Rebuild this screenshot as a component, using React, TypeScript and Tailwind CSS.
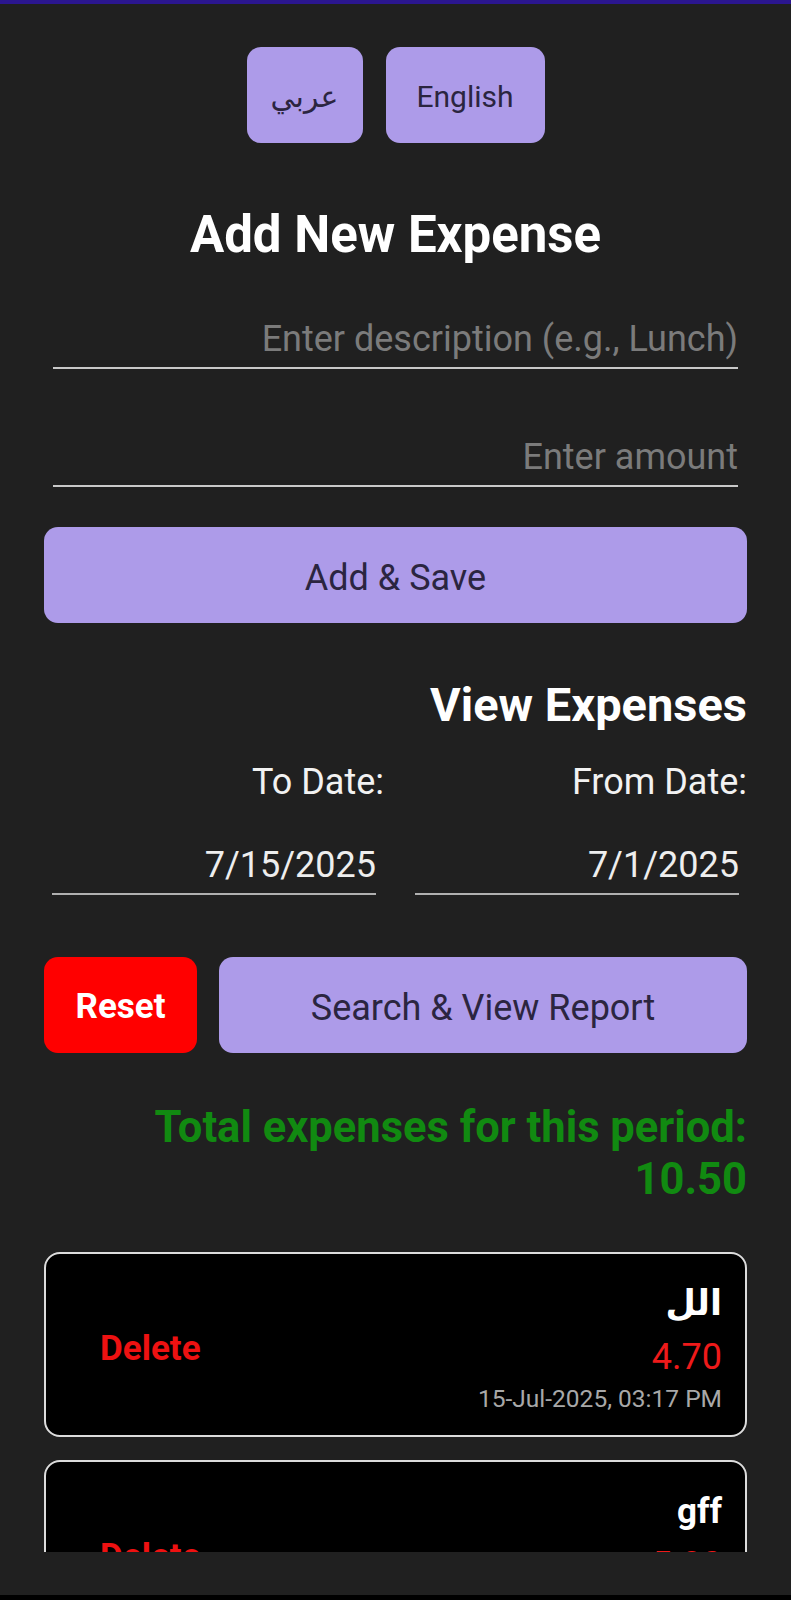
import React from "react";

const expenses = [
  { id: 1, title: "الل", amount: "4.70", date: "15-Jul-2025, 03:17 PM" },
  { id: 2, title: "gff", amount: "5.80", date: "15-Jul-2025, 03:12 PM" },
];

function UnderlineInput({ placeholder, value }: { placeholder?: string; value?: string }) {
  return (
    <div className="mx-[9px] border-b-2 border-[#c8c8c8] pb-[7px]">
      <input
        className="w-full h-[41px] bg-transparent text-right text-[36px] leading-[41px] text-[#eeeeee] placeholder:text-[#7b7b7b] outline-none"
        placeholder={placeholder}
        defaultValue={value}
      />
    </div>
  );
}

export default function App() {
  return (
    <div className="w-[791px] h-[1600px] bg-[#202020] flex flex-col font-[Roboto,'DejaVu_Sans',sans-serif]">
      <div className="h-[4px] bg-[#2b168f] shrink-0" />

      <div className="h-[1548px] overflow-hidden px-[44px] shrink-0">
        {/* language switch */}
        <div className="flex justify-center gap-[23px] mt-[43px]">
          <button className="w-[116px] h-[96px] pt-[2px] rounded-[14px] bg-[#ad9be9] text-[#2b2540] text-[30px]">
            عربي
          </button>
          <button className="w-[159px] h-[96px] pt-[2px] rounded-[14px] bg-[#ad9be9] text-[#2b2540] text-[30px]">
            English
          </button>
        </div>

        <h1 className="mt-[62px] text-center text-white font-bold text-[51px] leading-[60px]">
          Add New Expense
        </h1>

        <div className="mt-[54px]">
          <UnderlineInput placeholder="Enter description (e.g., Lunch)" />
        </div>
        <div className="mt-[68px]">
          <UnderlineInput placeholder="Enter amount" />
        </div>

        <button className="mt-[40px] w-full h-[96px] pt-[6px] rounded-[14px] bg-[#ad9be9] text-[#2b2540] text-[36px]">
          Add &amp; Save
        </button>

        <h2 className="mt-[54px] text-right text-white font-bold text-[47px] leading-[56px]">
          View Expenses
        </h2>

        <div className="mt-[29px] grid grid-cols-2 gap-[23px]">
          <div>
            <div className="text-right text-[#f2f2f2] text-[36px] leading-[41px]">To Date:</div>
            <div className="mt-[42px] mx-[8px] border-b-2 border-[#b0b0b0] pb-[7px] text-right text-[#eeeeee] text-[36px] leading-[41px]">
              7/15/2025
            </div>
          </div>
          <div>
            <div className="text-right text-[#f2f2f2] text-[36px] leading-[41px]">From Date:</div>
            <div className="mt-[42px] mx-[8px] border-b-2 border-[#b0b0b0] pb-[7px] text-right text-[#eeeeee] text-[36px] leading-[41px]">
              7/1/2025
            </div>
          </div>
        </div>

        <div className="mt-[62px] flex gap-[22px]">
          <button className="w-[153px] h-[96px] pt-[4px] rounded-[14px] bg-[#ff0000] text-white font-bold text-[35px]">
            Reset
          </button>
          <button className="flex-1 h-[96px] pt-[6px] rounded-[14px] bg-[#ad9be9] text-[#2b2540] text-[36px]">
            Search &amp; View Report
          </button>
        </div>

        <div className="mt-[49px] text-right text-[#118a11] font-bold text-[43.5px] leading-[52px]">
          <div>Total expenses for this period:</div>
          <div>10.50</div>
        </div>

        <div className="mt-[46px] flex flex-col gap-[23px]">
          {expenses.map((e) => (
            <div
              key={e.id}
              className="h-[185px] shrink-0 rounded-[16px] border-2 border-[#dcdcdc] bg-black flex justify-between pl-[54px] pr-[23px]"
            >
              <span className="self-center mt-[7px] text-[#ee1111] font-bold text-[35px] leading-[41px]">
                Delete
              </span>
              <div className="pt-[29px] flex flex-col items-end">
                <span className="text-white font-bold text-[35px] leading-[41px]">{e.title}</span>
                <span className="mt-[13px] text-[#ee1a1a] text-[36px] leading-[41px]">{e.amount}</span>
                <span className="mt-[6px] text-[#a8a8a8] text-[24.5px] leading-[30px]">{e.date}</span>
              </div>
            </div>
          ))}
        </div>
      </div>

      <div className="flex-1 bg-[#202020]" />
      <div className="h-[5px] bg-black shrink-0" />
    </div>
  );
}
